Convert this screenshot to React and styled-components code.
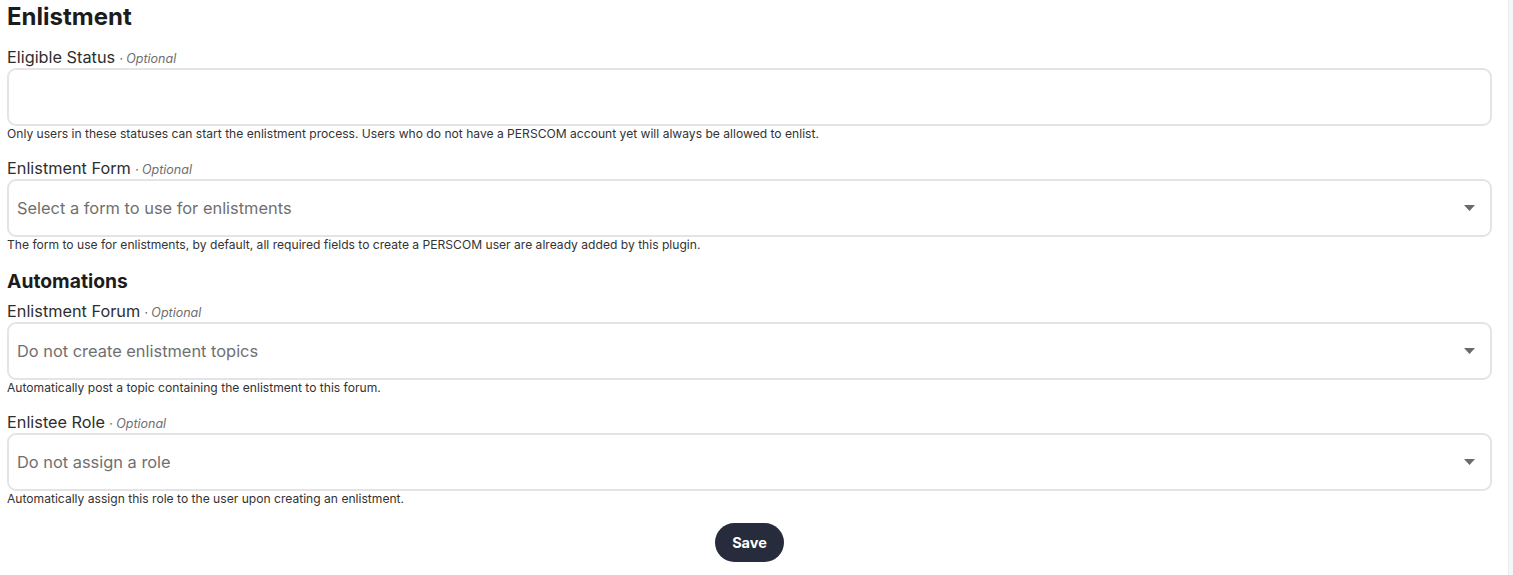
import React from "react";
import styled, { createGlobalStyle } from "styled-components";

const Global = createGlobalStyle`
  html, body { margin: 0; padding: 0; background: #fff; }
  body { font-family: Inter, "Noto Sans", sans-serif; color: #1f1f1f; }
`;

const Shell = styled.div`
  display: flex;
  min-height: 575px;
`;

const Main = styled.form`
  flex: 1;
  padding: 2px 16px 0 7px;
  display: flex;
  flex-direction: column;
`;

const Rail = styled.div`
  width: 4px;
  background: #f6f6f7;
  border-left: 1px solid #ececec;
`;

const Title = styled.h1`
  margin: 0 0 15px;
  font-size: 24px;
  line-height: 30px;
  font-weight: 700;
  color: #1c1c1c;
`;

const SubTitle = styled.h2`
  margin: 16px 0 8px;
  font-size: 19.3px;
  line-height: 24px;
  font-weight: 700;
  color: #1c1c1c;
`;

const Field = styled.div`
  display: flex;
  flex-direction: column;
  & + & { margin-top: 16px; }
`;

const Label = styled.label`
  display: block;
  height: 20px;
  font-size: 16.3px;
  line-height: 20px;
  font-weight: 400;
  color: #2e2e2e;
  margin-bottom: 1px;
  white-space: nowrap;
`;

const Optional = styled.span`
  font-size: 12.5px;
  line-height: 0;
  font-style: italic;
  color: #6e6e6e;
  margin-left: 4px;
`;

const Box = styled.div`
  position: relative;
  box-sizing: border-box;
  height: 58px;
  border: 2px solid #e4e4e6;
  border-radius: 9px;
  background: #fff;
  display: flex;
  align-items: center;
  padding: 0 15px 0 8px;
  font-size: 16.4px;
  color: #6f6f6f;
`;

const Value = styled.span`
  flex: 1;
`;

const Caret = styled.svg`
  width: 11px;
  height: 6px;
  fill: #6a6a6a;
`;

const Help = styled.p`
  margin: 0;
  height: 16px;
  font-size: 12.1px;
  line-height: 16px;
  color: #333;
  white-space: nowrap;
`;

const Actions = styled.div`
  display: flex;
  justify-content: center;
  margin-top: 16px;
`;

const SaveButton = styled.button`
  height: 39px;
  padding: 0 17px;
  border: none;
  border-radius: 20px;
  background: #272c3c;
  color: #fff;
  font-family: Inter, sans-serif;
  font-weight: 700;
  font-size: 14.5px;
  cursor: pointer;
`;

const fields1 = [
  {
    label: "Eligible Status",
    value: "",
    select: false,
    help: "Only users in these statuses can start the enlistment process. Users who do not have a PERSCOM account yet will always be allowed to enlist.",
  },
  {
    label: "Enlistment Form",
    value: "Select a form to use for enlistments",
    select: true,
    help: "The form to use for enlistments, by default, all required fields to create a PERSCOM user are already added by this plugin.",
  },
];

const fields2 = [
  {
    label: "Enlistment Forum",
    value: "Do not create enlistment topics",
    select: true,
    help: "Automatically post a topic containing the enlistment to this forum.",
  },
  {
    label: "Enlistee Role",
    value: "Do not assign a role",
    select: true,
    help: "Automatically assign this role to the user upon creating an enlistment.",
  },
];

function FieldRow({ f }) {
  return (
    <Field>
      <Label>
        {f.label}
        <Optional>· Optional</Optional>
      </Label>
      <Box>
        <Value>{f.value}</Value>
        {f.select && (
          <Caret viewBox="0 0 11 6">
            <path d="M0 0h11L5.5 6z" />
          </Caret>
        )}
      </Box>
      <Help>{f.help}</Help>
    </Field>
  );
}

export default function App() {
  return (
    <>
      <Global />
      <Shell>
        <Main onSubmit={(e) => e.preventDefault()}>
          <Title>Enlistment</Title>
          {fields1.map((f) => (
            <FieldRow key={f.label} f={f} />
          ))}
          <SubTitle>Automations</SubTitle>
          {fields2.map((f) => (
            <FieldRow key={f.label} f={f} />
          ))}
          <Actions>
            <SaveButton type="submit">Save</SaveButton>
          </Actions>
        </Main>
        <Rail />
      </Shell>
    </>
  );
}
